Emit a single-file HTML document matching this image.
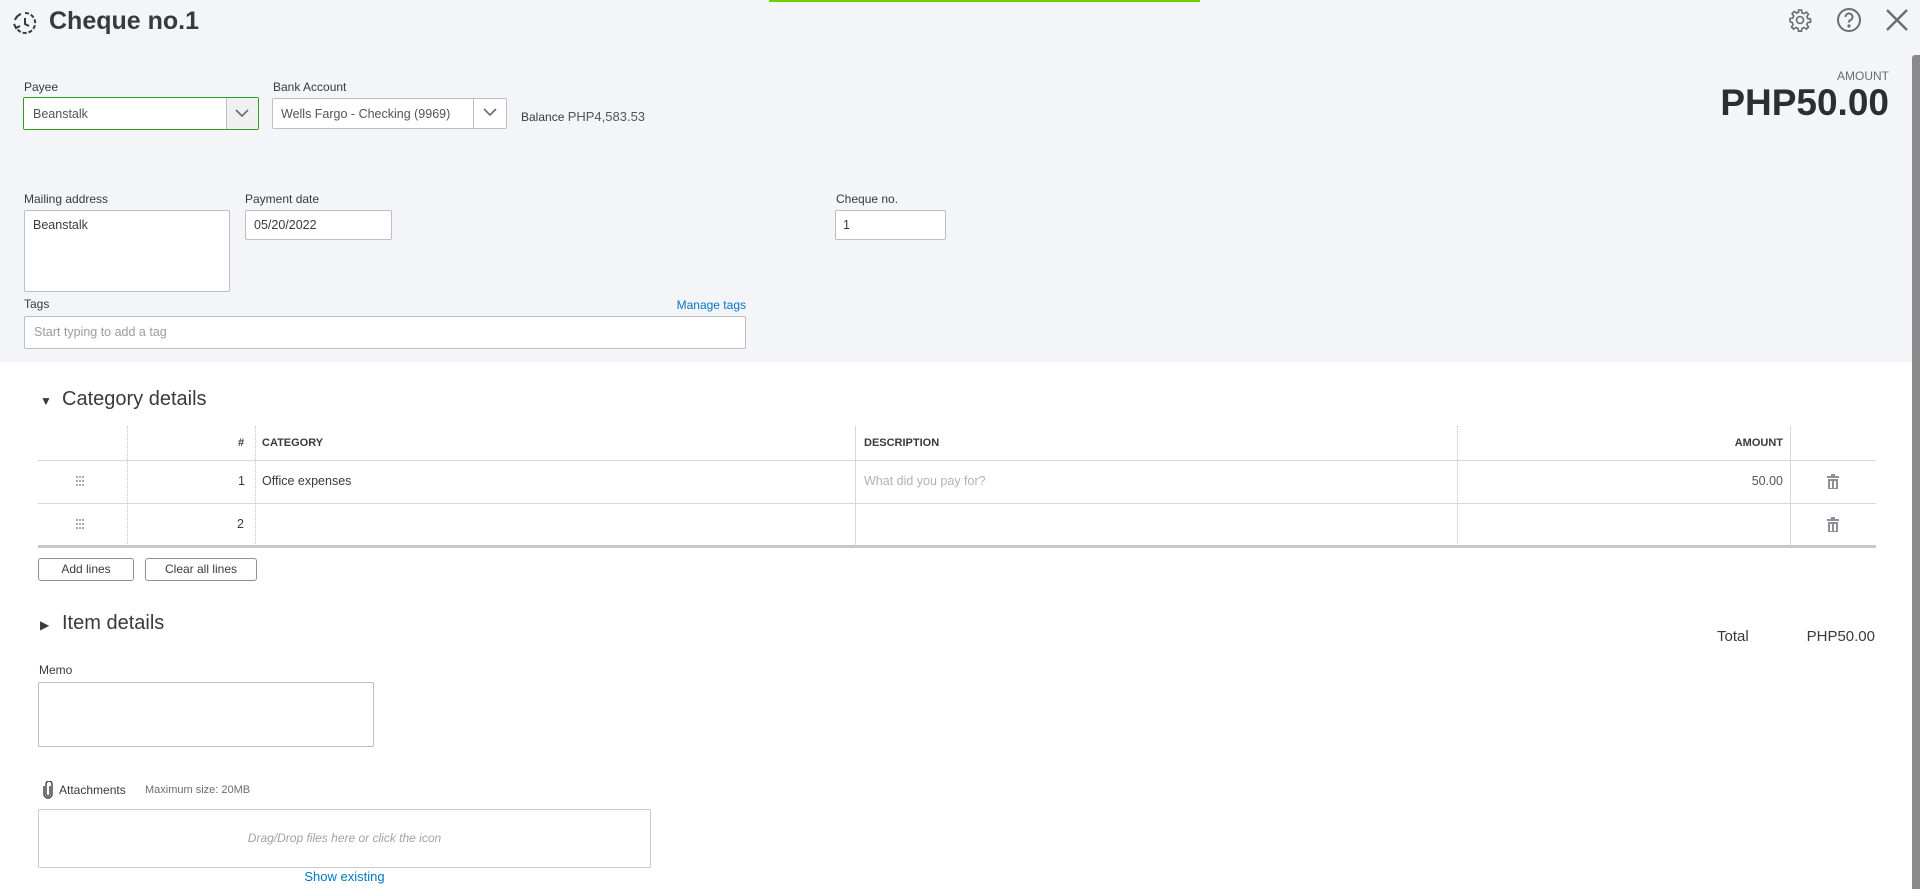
<!DOCTYPE html>
<html><head><meta charset="utf-8"><style>
*{box-sizing:border-box;margin:0;padding:0}
body{width:1920px;height:889px;overflow:hidden;background:#fff;font-family:"Liberation Sans",Arial,sans-serif;color:#393a3d;position:relative}
.a{position:absolute}
.hdr{left:0;top:0;width:1920px;height:362px;background:#f4f5f8}
.lbl{font-size:12px;color:#393a3d}
.box{background:#fff;border:1px solid #babec5;border-radius:2px}
.txt{font-size:12.5px;color:#393a3d}
.vl{position:absolute;top:426px;height:120px;border-left:1px dotted #c8c8c8}
.hl{position:absolute;left:38px;width:1838px;border-top:1px solid #d4d7dc}
.btn{border:1px solid #8d9096;border-radius:3px;background:#fff;font-size:12px;text-align:center;line-height:20px;color:#393a3d}
</style></head><body>
<div class="a hdr"></div>
<div class="a" style="left:769px;top:0;width:431px;height:2px;background:#6cd000"></div>
<svg class="a" style="left:12px;top:10px" width="26" height="26" viewBox="0 0 26 26" fill="none" stroke="#393a3d" stroke-width="2"><path d="M13 3a10 10 0 1 1-9 14" stroke-dasharray="4 2"/><path d="M3 10a10 10 0 0 1 6-6"/><path d="M13 8v6l4 2"/><path d="M2 14l2 4 4-2"/></svg>
<div class="a" style="left:49px;top:7px;font-size:25px;font-weight:bold;color:#393a3d">Cheque no.1</div>
<svg class="a" style="left:1788px;top:8px" width="24" height="24" viewBox="0 0 24 24" fill="none" stroke="#6b6c72" stroke-width="1.6"><circle cx="12" cy="12" r="3.5"/><path d="M10.5 2h3l.5 2.8 2 .9 2.4-1.6 2.1 2.1-1.6 2.4.9 2 2.8.5v3l-2.8.5-.9 2 1.6 2.4-2.1 2.1-2.4-1.6-2 .9-.5 2.8h-3l-.5-2.8-2-.9-2.4 1.6-2.1-2.1 1.6-2.4-.9-2L2 13.5v-3l2.8-.5.9-2-1.6-2.4 2.1-2.1 2.4 1.6 2-.9z"/></svg>
<svg class="a" style="left:1836px;top:7px" width="26" height="26" viewBox="0 0 26 26" fill="none" stroke="#6b6c72" stroke-width="2"><circle cx="13" cy="13" r="11"/><path d="M9.5 10a3.5 3.5 0 1 1 4.5 3.3c-.8.3-1 .9-1 1.7v.5"/><circle cx="13" cy="19" r=".6" fill="#6b6c72"/></svg>
<svg class="a" style="left:1885px;top:8px" width="24" height="24" viewBox="0 0 24 24" stroke="#6b6c72" stroke-width="2.4"><path d="M2 2l20 20M22 2L2 22"/></svg>
<div class="a" style="left:1912px;top:55px;width:8px;height:834px;background:#8a8a8a;border-radius:3px 0 0 0"></div>
<div class="a" style="right:31px;top:69px;font-size:12px;color:#6b6c72">AMOUNT</div>
<div class="a" style="right:31px;top:82px;font-size:37px;font-weight:bold;color:#2d2e31">PHP50.00</div>

<div class="a lbl" style="left:24px;top:80px">Payee</div>
<div class="a box" style="left:23px;top:97px;width:236px;height:33px;border:1px solid #2ca01c"></div>
<div class="a" style="left:226px;top:98px;width:32px;height:31px;background:#f0f0f0;border-left:1px solid #babec5"></div>
<svg class="a" style="left:235px;top:107px" width="14" height="12" viewBox="0 0 14 12" fill="none" stroke="#6b6c72" stroke-width="1.6"><path d="M1 3l6 6 6-6"/></svg>
<div class="a txt" style="left:33px;top:107px;color:#555">Beanstalk</div>
<div class="a lbl" style="left:273px;top:80px">Bank Account</div>
<div class="a box" style="left:272px;top:98px;width:235px;height:31px"></div>
<div class="a" style="left:473px;top:98px;height:31px;border-left:1px solid #babec5"></div>
<svg class="a" style="left:483px;top:106px" width="14" height="12" viewBox="0 0 14 12" fill="none" stroke="#6b6c72" stroke-width="1.6"><path d="M1 3l6 6 6-6"/></svg>
<div class="a txt" style="left:281px;top:107px;color:#555">Wells Fargo - Checking (9969)</div>
<div class="a" style="left:521px;top:109px;font-size:12px;color:#393a3d">Balance <span style="font-size:13px;color:#555">PHP4,583.53</span></div>

<div class="a lbl" style="left:24px;top:192px">Mailing address</div>
<div class="a box" style="left:24px;top:210px;width:206px;height:82px"></div>
<div class="a txt" style="left:33px;top:218px">Beanstalk</div>
<div class="a lbl" style="left:245px;top:192px">Payment date</div>
<div class="a box" style="left:245px;top:210px;width:147px;height:30px"></div>
<div class="a txt" style="left:254px;top:218px">05/20/2022</div>
<div class="a lbl" style="left:836px;top:192px">Cheque no.</div>
<div class="a box" style="left:835px;top:210px;width:111px;height:30px"></div>
<div class="a txt" style="left:843px;top:218px">1</div>
<div class="a lbl" style="left:24px;top:297px">Tags</div>
<div class="a" style="right:1174px;top:298px;font-size:12px;color:#0077c5">Manage tags</div>
<div class="a box" style="left:24px;top:316px;width:722px;height:33px"></div>
<div class="a txt" style="left:34px;top:325px;color:#9a9ca0">Start typing to add a tag</div>

<div class="a" style="left:40px;top:394px;font-size:12px">&#9660;</div>
<div class="a" style="left:62px;top:388px;font-size:20px;color:#393a3d">Category details</div>
<div class="hl" style="top:460px"></div>
<div class="hl" style="top:503px"></div>
<div class="hl" style="top:545px;border-top:3px solid #c8c8c8"></div>
<div class="vl" style="left:127px"></div>
<div class="vl" style="left:255px"></div>
<div class="vl" style="left:855px;border-left-style:solid;border-color:#d4d7dc"></div>
<div class="vl" style="left:1457px"></div>
<div class="vl" style="left:1790px;border-left-style:solid;border-color:#d4d7dc"></div>
<div class="a" style="left:238px;top:437px;font-size:11px;font-weight:bold">#</div>
<div class="a" style="left:262px;top:437px;font-size:11px;font-weight:bold">CATEGORY</div>
<div class="a" style="left:864px;top:437px;font-size:11px;font-weight:bold">DESCRIPTION</div>
<div class="a" style="right:137px;top:437px;font-size:11px;font-weight:bold">AMOUNT</div>
<svg class="a" style="left:76px;top:476px" width="8" height="11" viewBox="0 0 8 11" fill="#aaa"><rect x="0" y="0" width="2" height="2"/><rect x="3" y="0" width="2" height="2"/><rect x="6" y="0" width="2" height="2"/><rect x="0" y="4" width="2" height="2"/><rect x="3" y="4" width="2" height="2"/><rect x="6" y="4" width="2" height="2"/><rect x="0" y="8" width="2" height="2"/><rect x="3" y="8" width="2" height="2"/><rect x="6" y="8" width="2" height="2"/></svg>
<svg class="a" style="left:76px;top:519px" width="8" height="11" viewBox="0 0 8 11" fill="#aaa"><rect x="0" y="0" width="2" height="2"/><rect x="3" y="0" width="2" height="2"/><rect x="6" y="0" width="2" height="2"/><rect x="0" y="4" width="2" height="2"/><rect x="3" y="4" width="2" height="2"/><rect x="6" y="4" width="2" height="2"/><rect x="0" y="8" width="2" height="2"/><rect x="3" y="8" width="2" height="2"/><rect x="6" y="8" width="2" height="2"/></svg>
<div class="a txt" style="left:238px;top:474px">1</div>
<div class="a txt" style="left:262px;top:474px">Office expenses</div>
<div class="a txt" style="left:864px;top:474px;color:#b0b2b6">What did you pay for?</div>
<div class="a txt" style="right:137px;top:474px;color:#555">50.00</div>
<div class="a txt" style="left:237px;top:517px">2</div>
<svg class="a" style="left:1827px;top:474px" width="12" height="15" viewBox="0 0 12 15" fill="#8d9096"><rect x="0" y="2" width="12" height="2"/><rect x="4" y="0" width="4" height="2"/><path d="M1 5h10v10H1z M3 7v7h2V7z M7 7v7h2V7z" fill-rule="evenodd"/></svg>
<svg class="a" style="left:1827px;top:517px" width="12" height="15" viewBox="0 0 12 15" fill="#8d9096"><rect x="0" y="2" width="12" height="2"/><rect x="4" y="0" width="4" height="2"/><path d="M1 5h10v10H1z M3 7v7h2V7z M7 7v7h2V7z" fill-rule="evenodd"/></svg>
<div class="a btn" style="left:38px;top:558px;width:96px;height:23px">Add lines</div>
<div class="a btn" style="left:145px;top:558px;width:112px;height:23px">Clear all lines</div>

<div class="a" style="left:40px;top:618px;font-size:12px">&#9654;</div>
<div class="a" style="left:62px;top:612px;font-size:20px;color:#393a3d">Item details</div>
<div class="a" style="left:1717px;top:628px;font-size:15px">Total</div>
<div class="a" style="right:45px;top:628px;font-size:15px">PHP50.00</div>

<div class="a lbl" style="left:39px;top:663px">Memo</div>
<div class="a box" style="left:38px;top:682px;width:336px;height:65px"></div>
<svg class="a" style="left:43px;top:781px" width="10" height="18" viewBox="0 0 10 18" fill="none" stroke="#393a3d" stroke-width="1.4"><path d="M7 5v8a2 2 0 0 1-4 0V3a3 3 0 0 1 6 0v10a4 4 0 0 1-8 0V5"/></svg>
<div class="a lbl" style="left:59px;top:783px">Attachments</div>
<div class="a" style="left:145px;top:784px;font-size:11px;color:#6b6c72">Maximum size: 20MB</div>
<div class="a box" style="left:38px;top:809px;width:613px;height:59px;border-color:#c8cbd0"></div>
<div class="a" style="left:38px;top:831px;width:613px;text-align:center;font-size:12px;font-style:italic;color:#a0a2a6">Drag/Drop files here or click the icon</div>
<div class="a" style="left:38px;top:869px;width:613px;text-align:center;font-size:13px;color:#0077c5">Show existing</div>
</body></html>
